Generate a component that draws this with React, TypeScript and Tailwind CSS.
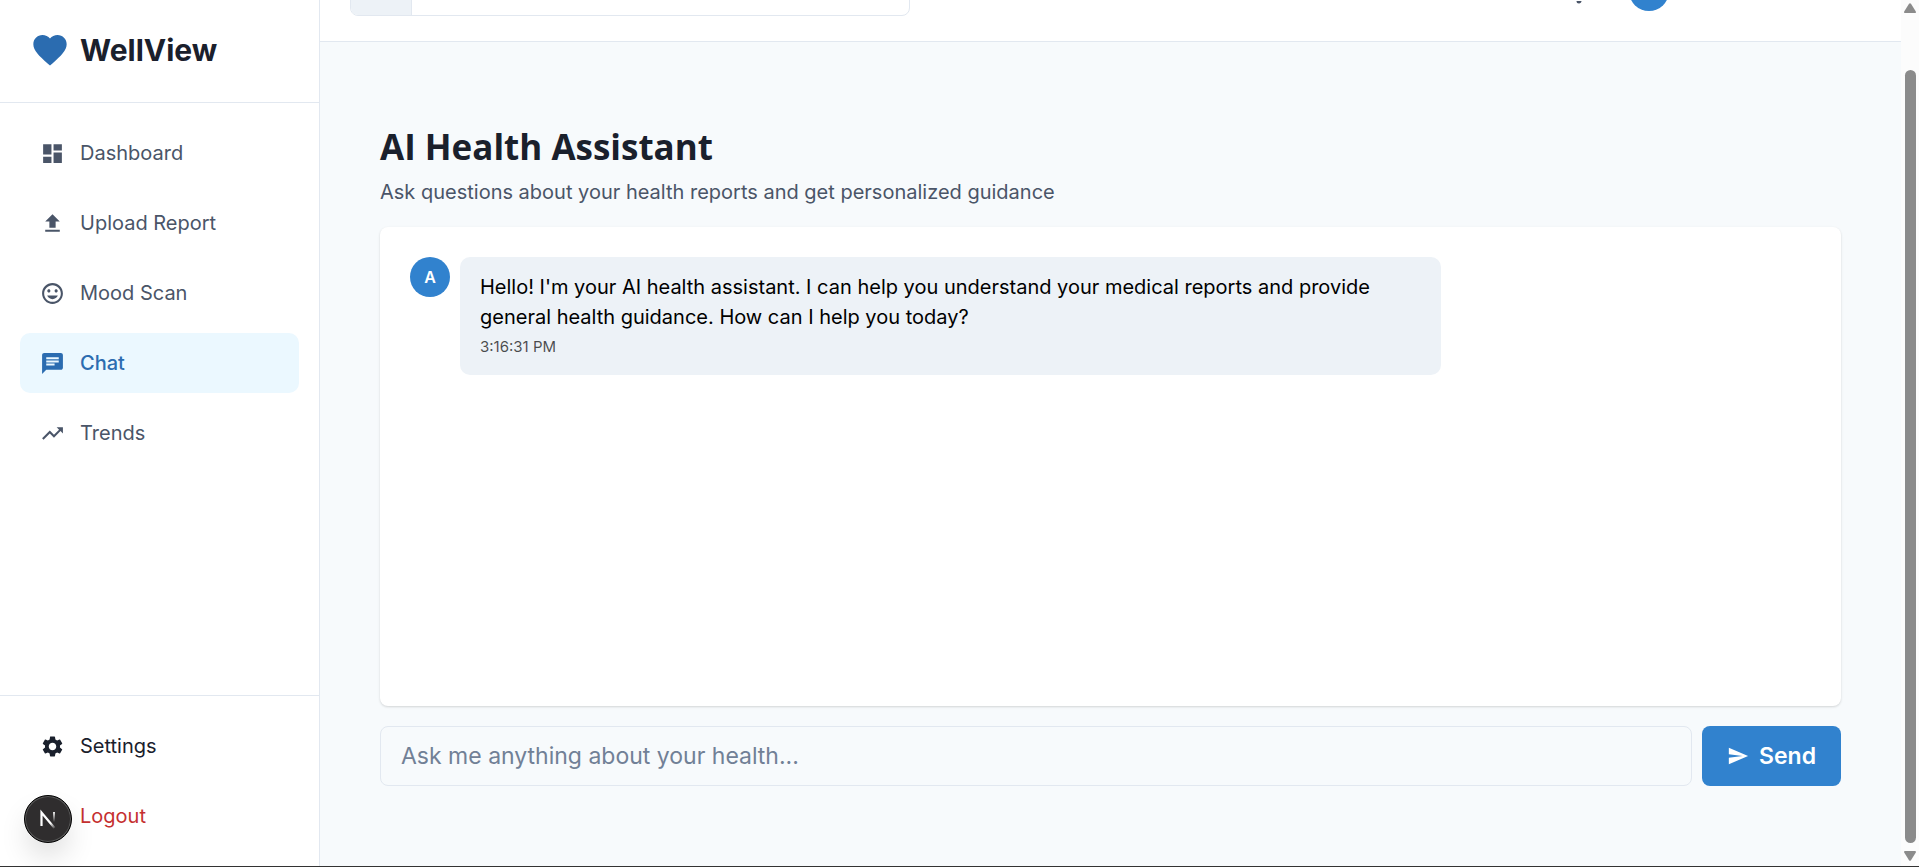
import { useState } from "react";
import {
  MdChat,
  MdDashboard,
  MdFavorite,
  MdFileUpload,
  MdMood,
  MdNotifications,
  MdSend,
  MdSettings,
  MdTrendingUp,
} from "react-icons/md";
import type { IconType } from "react-icons";

interface NavItemProps {
  icon?: IconType;
  label: string;
  active?: boolean;
  className?: string;
}

interface Message {
  id: number;
  initial: string;
  text: string;
  time: string;
}

const navItems: { icon: IconType; label: string }[] = [
  { icon: MdDashboard, label: "Dashboard" },
  { icon: MdFileUpload, label: "Upload Report" },
  { icon: MdMood, label: "Mood Scan" },
  { icon: MdChat, label: "Chat" },
  { icon: MdTrendingUp, label: "Trends" },
];

const messages: Message[] = [
  {
    id: 1,
    initial: "A",
    text: "Hello! I'm your AI health assistant. I can help you understand your medical reports and provide general health guidance. How can I help you today?",
    time: "3:16:31 PM",
  },
];

const NavItem: React.FC<NavItemProps> = ({
  icon: Icon,
  label,
  active = false,
  className = "text-[#4a5568]",
}) => {
  return (
    <a
      href="#"
      className={
        active
          ? "flex items-center gap-[15px] h-[60px] px-5 rounded-[10px] bg-[#ebf8ff] text-[#2b6cb0] font-medium"
          : "flex items-center gap-[15px] h-[60px] px-5 rounded-[10px] " +
            className
      }
    >
      <span className="w-[25px] h-[25px]">{Icon && <Icon size={25} />}</span>
      <span className="text-xl leading-[30px]">{label}</span>
    </a>
  );
};

const Sidebar = () => {
  return (
    <aside className="flex flex-col shrink-0 w-[320px] bg-white border-r border-[#e2e8f0]">
      <div className="flex items-start gap-[10px] h-[103px] px-[30px] pt-[30px] border-b border-[#e2e8f0]">
        <MdFavorite size={40} className="text-[#2b6cb0]" />
        <span className="text-3xl leading-10 font-bold text-[#1a202c]">
          WellView
        </span>
      </div>
      <nav className="flex flex-col gap-[10px] grow p-5">
        {navItems.map((item) => (
          <NavItem key={item.label} {...item} active={item.label === "Chat"} />
        ))}
      </nav>
      <div className="flex flex-col gap-[10px] p-5 border-t border-[#e2e8f0]">
        <NavItem
          icon={MdSettings}
          label="Settings"
          className="text-[#1a202c]"
        />
        <NavItem label="Logout" className="text-[#c53030]" />
      </div>
    </aside>
  );
};

const Header = () => {
  return (
    <header className="flex items-end justify-between h-[42px] px-[30px] pb-[25px] bg-white border-b border-[#e2e8f0] overflow-hidden">
      <div className="flex shrink-0 w-[560px] h-[50px] border border-[#e2e8f0] rounded-lg overflow-hidden">
        <span className="w-[61px] bg-[#edf2f7] border-r border-[#e2e8f0]" />
        <input
          type="text"
          aria-label="Search"
          className="grow outline-none px-5 text-xl"
        />
      </div>
      <div className="flex shrink-0 items-center h-[50px] w-[307px] gap-[35px]">
        <button type="button" aria-label="Notifications">
          <MdNotifications size={30} className="text-[#4a5568]" />
        </button>
        <span className="w-10 h-10 rounded-full bg-[#3182ce]" />
      </div>
    </header>
  );
};

const ChatMessage: React.FC<Omit<Message, "id">> = ({
  initial,
  text,
  time,
}) => {
  return (
    <div className="flex items-start gap-[10px]">
      <span className="flex shrink-0 items-center justify-center w-10 h-10 rounded-full bg-[#3182ce] text-white text-base font-semibold">
        {initial}
      </span>
      <div className="w-[70%] px-5 pt-[15px] pb-[17px] rounded-[10px] bg-[#edf2f7] text-black">
        <p className="text-xl leading-[30px]">{text}</p>
        <p className="mt-1 text-[15px] leading-[22px] text-black/70">{time}</p>
      </div>
    </div>
  );
};

const ScrollBar = () => {
  return (
    <div className="flex flex-col items-center justify-between shrink-0 w-[18px] pt-[3px] pb-[5px] bg-[#fcfcfc]">
      <svg width="12" height="10" viewBox="0 0 12 10" fill="#8b8b8b">
        <path d="M5 .8Q6-.5 7 .8L11.8 8.4Q12.3 10 11 10H1Q-.3 10 .2 8.4Z" />
      </svg>
      <div className="grow w-[11px] mt-[57px] mb-2 rounded-full bg-[#8b8b8b]" />
      <svg width="12" height="10" viewBox="0 0 12 10" fill="#8b8b8b">
        <path d="M5 9.2Q6 10.5 7 9.2L11.8 1.6Q12.3 0 11 0H1Q-.3 0 .2 1.6Z" />
      </svg>
    </div>
  );
};

const DevBadge = () => {
  return (
    <button
      type="button"
      aria-label="Open dev tools"
      className="fixed left-6 bottom-6 flex items-center justify-center w-12 h-12 rounded-full bg-[#2f2d2e] border border-black shadow-[inset_0_0_0_1px_#5a5a5a,0_16px_32px_-8px_rgba(0,0,0,0.24)]"
    >
      <svg width="18" height="20" viewBox="0 0 18 20" fill="none">
        <defs>
          <linearGradient
            id="diagonal"
            x1="9"
            y1="10"
            x2="16"
            y2="20"
            gradientUnits="userSpaceOnUse"
          >
            <stop stopColor="#fff" />
            <stop offset="0.4" stopColor="#fff" />
            <stop offset="1" stopColor="#fff" stopOpacity="0" />
          </linearGradient>
          <linearGradient
            id="stem"
            x1="15"
            y1="2"
            x2="15"
            y2="13"
            gradientUnits="userSpaceOnUse"
          >
            <stop stopColor="#fff" />
            <stop offset="1" stopColor="#fff" stopOpacity="0" />
          </linearGradient>
        </defs>
        <path
          d="M2.500 17V3.500L15.500 19"
          stroke="url(#diagonal)"
          strokeWidth="2.200"
        />
        <path d="M15 3V13" stroke="url(#stem)" strokeWidth="2" />
      </svg>
    </button>
  );
};

const App = () => {
  const [question, setQuestion] = useState("");

  return (
    <div className="flex min-h-screen border-b border-[#333333] bg-[#f7fafc] font-[Inter,sans-serif]">
      <Sidebar />
      <div className="flex flex-col grow min-w-0">
        <Header />
        <main className="flex flex-col grow px-[60px] pt-20 pb-20">
          <h1 className="text-[35px] leading-[50px] font-bold text-[#1a202c] font-['Open_Sans',sans-serif]">
            AI Health Assistant
          </h1>
          <p className="mt-[5px] text-xl leading-[30px] text-[#4a5568]">
            Ask questions about your health reports and get personalized
            guidance
          </p>
          <section className="grow mt-5 p-[30px] rounded-lg bg-white shadow-[0_1px_3px_rgba(0,0,0,0.1),0_1px_2px_rgba(0,0,0,0.06)]">
            {messages.map(({ id, ...message }) => (
              <ChatMessage key={id} {...message} />
            ))}
          </section>
          <form
            className="flex gap-[10px] mt-5"
            onSubmit={(e) => {
              e.preventDefault();
              setQuestion("");
            }}
          >
            <input
              type="text"
              aria-label="Your question"
              placeholder="Ask me anything about your health..."
              value={question}
              onChange={(e) => setQuestion(e.target.value)}
              className="grow min-w-0 h-[60px] px-5 text-[23px] rounded-lg border border-[#e2e8f0] bg-transparent outline-none placeholder:text-[#718096]"
            />
            <button
              type="submit"
              className="flex items-center justify-center gap-[10px] w-[139px] h-[60px] rounded-lg bg-[#3182ce] text-white text-[23px] font-semibold"
            >
              <MdSend size={22} />
              Send
            </button>
          </form>
        </main>
      </div>
      <ScrollBar />
      <DevBadge />
    </div>
  );
};

export default App;
